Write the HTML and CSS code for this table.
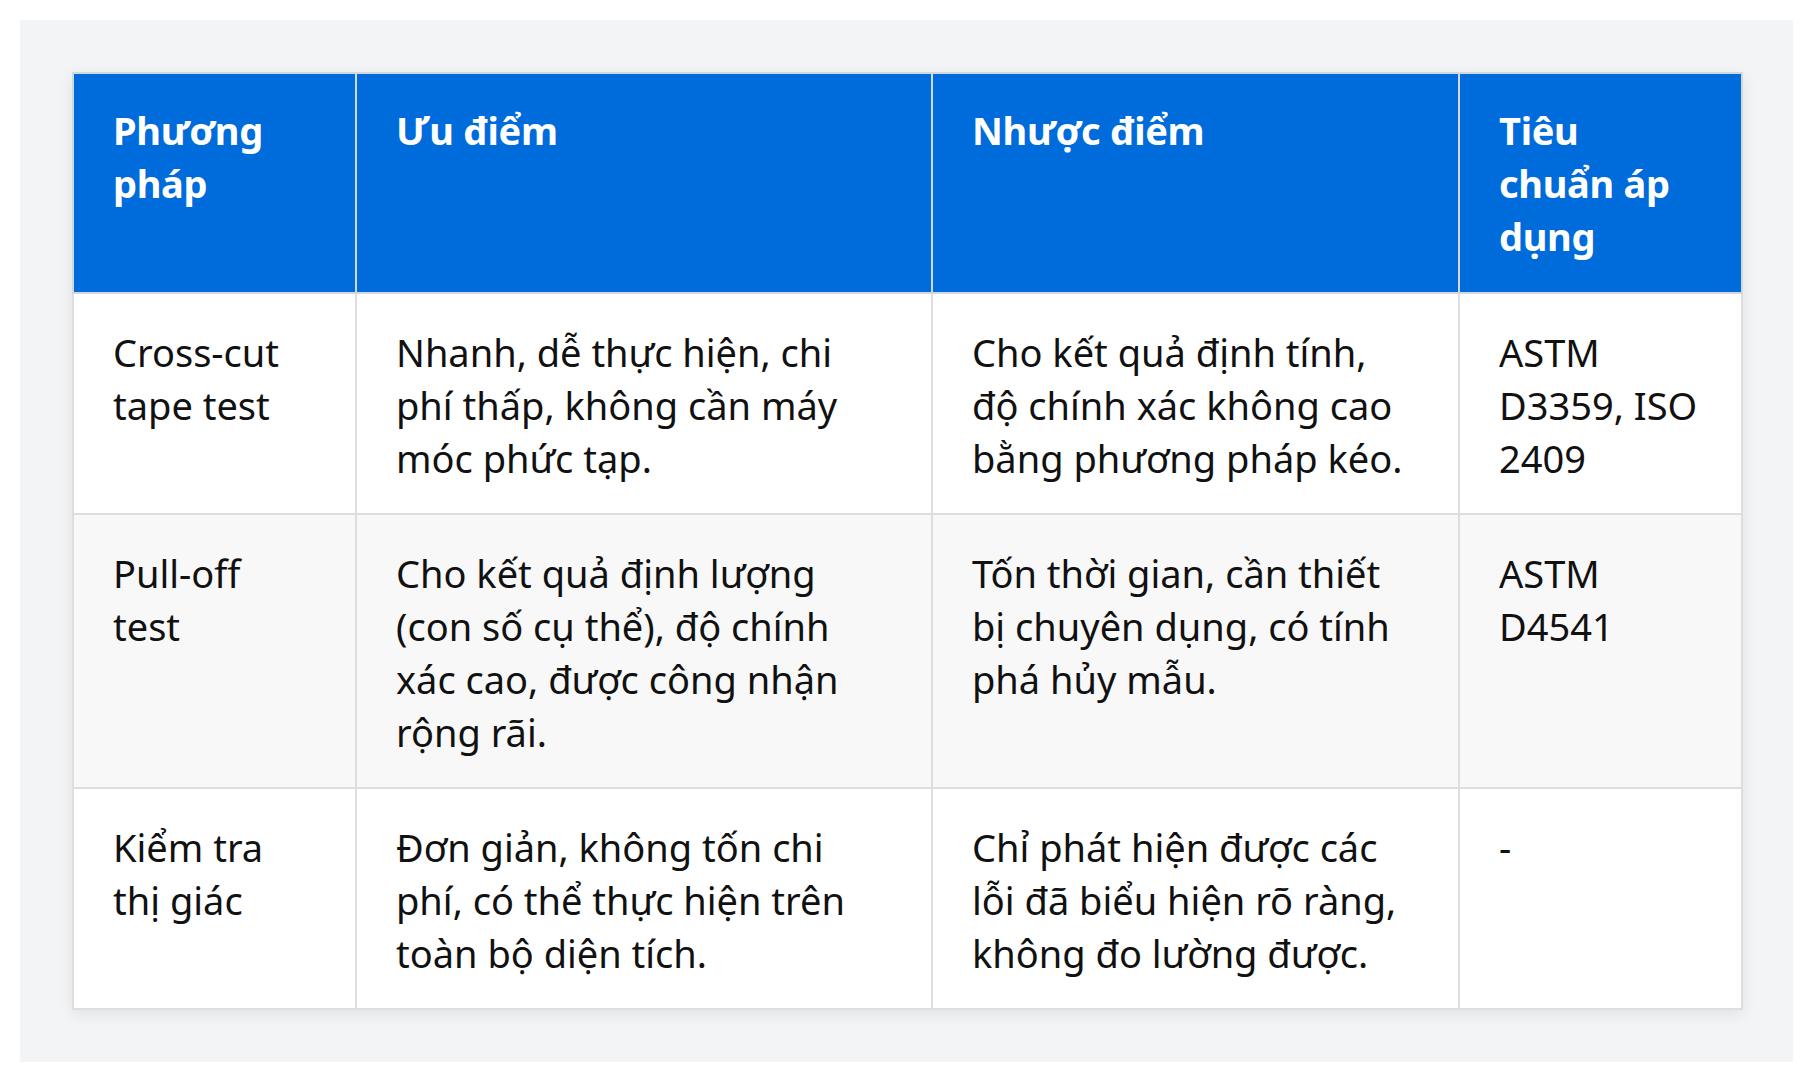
FILE: index.html
```html
<!DOCTYPE html>
<html lang="vi">
<head>
<meta charset="utf-8">
<title>So sánh phương pháp kiểm tra độ bám dính</title>
<link rel="stylesheet" href="styles.css">
</head>
<body>
<div class="panel">
  <table class="compare">
    <colgroup>
      <col class="c-method">
      <col class="c-pro">
      <col class="c-con">
      <col class="c-std">
    </colgroup>
    <thead>
      <tr>
        <th>Phương pháp</th>
        <th>Ưu điểm</th>
        <th>Nhược điểm</th>
        <th>Tiêu chuẩn áp dụng</th>
      </tr>
    </thead>
    <tbody>
      <tr>
        <td>Cross-cut tape test</td>
        <td>Nhanh, dễ thực hiện, chi phí thấp, không cần máy móc phức tạp.</td>
        <td>Cho kết quả định tính, độ chính xác không cao bằng phương pháp kéo.</td>
        <td>ASTM D3359, ISO 2409</td>
      </tr>
      <tr>
        <td>Pull-off test</td>
        <td>Cho kết quả định lượng (con số cụ thể), độ chính xác cao, được công nhận rộng rãi.</td>
        <td>Tốn thời gian, cần thiết bị chuyên dụng, có tính phá hủy mẫu.</td>
        <td>ASTM D4541</td>
      </tr>
      <tr>
        <td>Kiểm tra thị giác</td>
        <td>Đơn giản, không tốn chi phí, có thể thực hiện trên toàn bộ diện tích.</td>
        <td>Chỉ phát hiện được các lỗi đã biểu hiện rõ ràng, không đo lường được.</td>
        <td>-</td>
      </tr>
    </tbody>
  </table>
</div>
</body>
</html>
```

FILE: styles.css
```css
html, body {
  margin: 0;
  padding: 0;
  background: #ffffff;
}

body {
  padding: 20px;
  font-family: "Noto Sans", "Open Sans", "DejaVu Sans", sans-serif;
  color: #111111;
}

.panel {
  background: #f3f4f6;
  padding: 52px;
}

.compare {
  width: 100%;
  border-collapse: collapse;
  table-layout: fixed;
  background: #ffffff;
  box-shadow: 0 4px 14px rgba(0, 0, 0, 0.08);
  font-size: 38px;
  line-height: 53px;
}

.c-method { width: 283px; }
.c-pro { width: 576px; }
.c-con { width: 527px; }
.c-std { width: 283px; }

.compare th,
.compare td {
  border: 2px solid #dedede;
  padding: 32px 40px 28px 39px;
  text-align: left;
  vertical-align: top;
}

/* text measure per column */
.compare td:nth-child(1) { padding-right: 57px; }
.compare td:nth-child(2) { padding-right: 60px; }
.compare td:nth-child(3) { padding-right: 47px; }
.compare td:nth-child(4) { padding-right: 35px; }

.compare th {
  background: #006bdb;
  color: #ffffff;
  font-size: 38px;
  font-weight: 700;
  letter-spacing: -0.3px;
  border-color: #d2d8e0;
  padding: 30px 57px 29px 39px;
}

.compare tbody tr:nth-child(even) td {
  background: #f8f8f8;
}
```
